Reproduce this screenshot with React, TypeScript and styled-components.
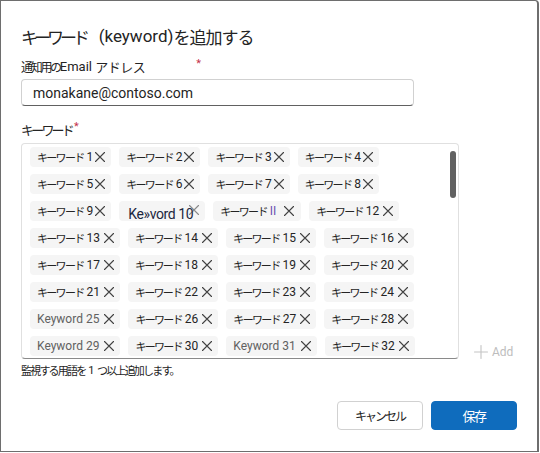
import React from 'react';
import styled, { createGlobalStyle } from 'styled-components';

const GlobalStyle = createGlobalStyle`
  html, body {
    margin: 0;
    padding: 0;
    background: #ffffff;
  }
  body {
    font-family: Roboto, "Noto Sans CJK JP", sans-serif;
    color: #242424;
  }
`;

type TagItem = {
  label: string;
  num?: string;
  kind?: 'ja' | 'en' | 'glitch' | 'roman';
};

const KW = 'キーワード';

const tags: TagItem[] = [
  ...[1, 2, 3, 4, 5, 6, 7, 8, 9].map((n) => ({ label: KW, num: ` ${n}` })),
  { label: 'Ke»vord 10', kind: 'glitch' as const },
  { label: KW, num: ' II', kind: 'roman' as const },
  ...[12, 13, 14, 15, 16, 17, 18, 19, 20, 21, 22, 23, 24].map((n) => ({ label: KW, num: ` ${n}` })),
  { label: 'Keyword 25', kind: 'en' as const },
  { label: KW, num: ' 26' },
  { label: KW, num: ' 27' },
  { label: KW, num: ' 28' },
  { label: 'Keyword 29', kind: 'en' as const },
  { label: KW, num: ' 30' },
  { label: 'Keyword 31', kind: 'en' as const },
  { label: KW, num: ' 32' },
];

const chunk = <T,>(list: T[], size: number): T[][] => {
  const out: T[][] = [];
  for (let i = 0; i < list.length; i += size) out.push(list.slice(i, i + size));
  return out;
};

const DismissIcon: React.FC = () => (
  <svg width="12" height="12" viewBox="0 0 12 12" fill="none">
    <path d="M1.5 1.5L10.5 10.5M10.5 1.5L1.5 10.5" stroke="#424242" strokeWidth="1.1" strokeLinecap="round" />
  </svg>
);

const PlusIcon: React.FC = () => (
  <svg width="14" height="14" viewBox="0 0 14 14" fill="none">
    <path d="M7 0.5V13.5M0.5 7H13.5" stroke="#c4c4c4" strokeWidth="1.1" strokeLinecap="round" />
  </svg>
);

const TagChip: React.FC<{ tag: TagItem }> = ({ tag }) => {
  const kind = tag.kind ?? 'ja';
  const wide = (tag.num ?? '').trim().length > 1 && kind === 'ja';
  return (
    <Tag $kind={kind}>
      {kind === 'en' || kind === 'glitch' ? (
        <LatinText $kind={kind}>{tag.label}</LatinText>
      ) : (
        <>
          <Ja $size={11} $track={-1.7}>{tag.label}</Ja>
          <TagNum $roman={kind === 'roman'} $wide={wide}>{tag.num}</TagNum>
        </>
      )}
      <DismissWrap $kind={kind}>
        <DismissIcon />
      </DismissWrap>
    </Tag>
  );
};

export default function App() {
  return (
    <>
      <GlobalStyle />
      <Dialog>
        <Title>
          <Ja $size={17} $track={-4}>キーワード</Ja>
          {'   (keyword)'}
          <Ja $size={17} $track={-1}>を追加する</Ja>
        </Title>
        <Label>
          <Ja $size={12} $track={-2.3}>通知用の</Ja>Email <Ja $size={13} $track={-0.5}>アドレス</Ja>
          <Required $gap={51}>*</Required>
        </Label>
        <Input>monakane@contoso.com</Input>
        <Label $top={13}>
          <Ja $size={13} $track={-2.8}>キーワード</Ja>
          <Required $gap={2}>*</Required>
        </Label>
        <PickerRow>
          <TagBox>
            {chunk(tags, 4).map((row, r) => (
              <TagRow key={r}>
                {row.map((t, i) => (
                  <TagChip key={i} tag={t} />
                ))}
              </TagRow>
            ))}
            <ScrollThumb />
          </TagBox>
          <AddButton>
            <PlusIcon />
            Add
          </AddButton>
        </PickerRow>
        <Hint>
          <Ja $size={11} $track={-1.8}>監視する用語を</Ja> 1 <Ja $size={11} $track={-1.8}>つ以上追加します。</Ja>
        </Hint>
        <Footer>
          <Button>
            <Ja $size={12} $track={-2}>キャンセル</Ja>
          </Button>
          <Button $primary>
            <Ja $size={13} $track={-1.5}>保存</Ja>
          </Button>
        </Footer>
      </Dialog>
    </>
  );
}

const Dialog = styled.div`
  box-sizing: border-box;
  width: 539px;
  height: 452px;
  border: 1px solid #6e6e6e;
  border-right-width: 2px;
  border-top-right-radius: 4px;
  padding: 21px 20px 21px 20px;
  display: flex;
  flex-direction: column;
  background: #ffffff;
`;

const Ja = styled.span<{ $size: number; $track: number }>`
  font-family: "Noto Sans CJK JP", sans-serif;
  font-size: ${(p) => p.$size}px;
  letter-spacing: ${(p) => p.$track}px;
`;

const Title = styled.h1`
  margin: 0;
  height: 28px;
  display: flex;
  align-items: center;
  font-size: 17px;
  font-weight: 400;
  color: #242424;
  white-space: pre;
`;

const Label = styled.div<{ $top?: number }>`
  margin-top: ${(p) => p.$top ?? 6}px;
  height: 20px;
  display: flex;
  align-items: center;
  font-size: 13px;
  color: #242424;
  white-space: pre;
`;

const Required = styled.span<{ $gap: number }>`
  color: #c4314b;
  margin-left: ${(p) => p.$gap}px;
  font-size: 11px;
  align-self: flex-start;
  margin-top: 1px;
`;

const Input = styled.div`
  box-sizing: border-box;
  margin-top: 3px;
  width: 393px;
  height: 27px;
  border: 1px solid #d1d1d1;
  border-bottom-color: #616161;
  border-radius: 4px;
  padding: 0 11px;
  display: flex;
  align-items: center;
  font-size: 14px;
  color: #242424;
`;

const PickerRow = styled.div`
  margin-top: 4px;
  display: flex;
  align-items: flex-end;
  gap: 15px;
`;

const TagBox = styled.div`
  position: relative;
  box-sizing: border-box;
  width: 438px;
  height: 216px;
  border: 1px solid #e0e0e0;
  border-bottom-color: #8a8a8a;
  border-radius: 4px;
  padding: 3px 8px 0 8px;
  display: flex;
  flex-direction: column;
  gap: 7px;
  overflow: hidden;
`;

const TagRow = styled.div`
  display: flex;
  gap: 8px;
`;

const Tag = styled.div<{ $kind: string }>`
  box-sizing: border-box;
  height: 20px;
  display: flex;
  align-items: center;
  background: #f5f5f5;
  border-radius: 4px;
  padding: 0 ${(p) => (p.$kind === 'roman' ? 6 : 5)}px 0 ${(p) => (p.$kind === 'glitch' ? 9 : 7)}px;
  white-space: pre;
  color: #242424;
`;

const TagNum = styled.span<{ $roman?: boolean; $wide?: boolean }>`
  font-size: 12px;
  color: ${(p) => (p.$roman ? '#6a4fb0' : '#242424')};
  margin-right: ${(p) => (p.$roman ? 7 : p.$wide ? 3 : 1)}px;
`;

const LatinText = styled.span<{ $kind: string }>`
  font-size: ${(p) => (p.$kind === 'glitch' ? 14 : 12)}px;
  line-height: 16px;
  color: ${(p) => (p.$kind === 'en' ? '#616161' : '#1c2740')};
  padding-top: ${(p) => (p.$kind === 'glitch' ? 6 : 0)}px;
  margin-right: ${(p) => (p.$kind === 'en' ? 4 : 0)}px;
  letter-spacing: ${(p) => (p.$kind === 'glitch' ? '-0.4px' : '0')};
`;

const DismissWrap = styled.span<{ $kind: string }>`
  display: flex;
  margin-left: ${(p) => (p.$kind === 'glitch' ? -5 : 0)}px;
  margin-top: ${(p) => (p.$kind === 'glitch' ? -3 : 0)}px;
  opacity: ${(p) => (p.$kind === 'glitch' ? 0.6 : 1)};
`;

const ScrollThumb = styled.div`
  position: absolute;
  right: 2px;
  top: 7px;
  width: 6px;
  height: 47px;
  border-radius: 3px;
  background: #616161;
`;

const AddButton = styled.div`
  display: flex;
  align-items: center;
  gap: 4px;
  font-size: 12px;
  color: #bdbdbd;
`;

const Hint = styled.div`
  margin-top: 3px;
  height: 16px;
  display: flex;
  align-items: center;
  font-size: 11px;
  color: #242424;
  white-space: pre;
`;

const Footer = styled.div`
  margin-top: auto;
  display: flex;
  justify-content: flex-end;
  gap: 8px;
`;

const Button = styled.button<{ $primary?: boolean }>`
  box-sizing: border-box;
  width: 86px;
  height: 29px;
  border-radius: 4px;
  font-family: inherit;
  font-size: 13px;
  border: 1px solid ${(p) => (p.$primary ? '#0f6cbd' : '#d1d1d1')};
  background: ${(p) => (p.$primary ? '#0f6cbd' : '#ffffff')};
  color: ${(p) => (p.$primary ? '#ffffff' : '#242424')};
  cursor: pointer;
`;
